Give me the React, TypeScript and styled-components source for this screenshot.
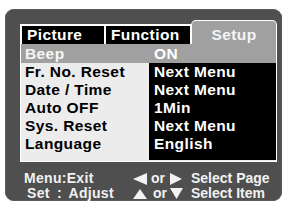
import React from "react";
import styled, { createGlobalStyle } from "styled-components";

const Global = createGlobalStyle`
  html, body { margin: 0; padding: 0; background: #ffffff; }
  body { width: 284px; height: 204px; overflow: hidden; font-family: "Liberation Sans", Arial, sans-serif; }
  * { box-sizing: border-box; }
`;

const Page = styled.div`
  padding: 9px 2px 0 5px;
`;

const Panel = styled.div`
  width: 277px;
  height: 192px;
  background: #4f4f4f;
  border-radius: 9px;
  padding: 15px 0 0 15px;
  box-shadow: inset 0 0 0 1px #5c5c5c;
`;

const Screen = styled.div`
  width: 257px;
  border: 1px solid #ffffff;
  background: #ececec;
  padding-bottom: 1px;
`;

const TabRow = styled.div`
  display: flex;
  align-items: flex-end;
  height: 19px;
  padding: 1px 0 0 1px;
  gap: 2px;
  background: #ffffff;
`;

const Tab = styled.div<{ $w: number; $active?: boolean }>`
  width: ${(p) => p.$w}px;
  height: ${(p) => (p.$active ? 24 : 18)}px;
  flex: none;
  background: ${(p) => (p.$active ? "#a0a0a0" : "#000000")};
  color: ${(p) => (p.$active ? "#f4f4f4" : "#ffffff")};
  border: ${(p) => (p.$active ? "1px solid #ffffff" : "none")};
  border-bottom: none;
  border-radius: ${(p) => (p.$active ? "5px 5px 0 0" : "0")};
  margin-left: ${(p) => (p.$active ? "-1px" : "0")};
  padding: ${(p) => (p.$active ? "5px 0 0 0" : "0 0 0 5px")};
  text-align: ${(p) => (p.$active ? "center" : "left")};
  font-size: 15.5px;
  font-weight: 700;
  line-height: 18px;
  letter-spacing: 0.4px;
  white-space: nowrap;
`;

const Body = styled.div`
  display: flex;
  flex-direction: column;
`;

const Row = styled.div<{ $hl?: boolean; $h: number }>`
  display: grid;
  grid-template-columns: 128px 127px;
  height: ${(p) => p.$h}px;
  background: ${(p) => (p.$hl ? "#a0a0a0" : "transparent")};
`;

const Label = styled.div<{ $hl?: boolean; $h: number }>`
  padding-left: 4px;
  color: ${(p) => (p.$hl ? "#f6f6f6" : "#000000")};
  font-size: 15.5px;
  font-weight: 700;
  line-height: ${(p) => p.$h}px;
  letter-spacing: 0.4px;
  white-space: nowrap;
`;

const Value = styled.div<{ $hl?: boolean; $h: number }>`
  padding-left: 5px;
  background: ${(p) => (p.$hl ? "transparent" : "#000000")};
  color: #ffffff;
  font-size: 15.5px;
  font-weight: 700;
  line-height: ${(p) => p.$h}px;
  letter-spacing: 0.4px;
  white-space: nowrap;
`;

const Footer = styled.div`
  display: grid;
  grid-template-columns: 109px 18px 19px 21px auto;
  grid-auto-rows: 15px;
  align-items: center;
  padding: 9px 0 0 4px;
  color: #f2f2f2;
  font-size: 14px;
  font-weight: 700;
  line-height: 15px;
  white-space: nowrap;
`;

const Hint = styled.span<{ $indent?: number; $wide?: boolean }>`
  padding-left: ${(p) => p.$indent ?? 0}px;
  letter-spacing: ${(p) => (p.$wide ? "0.3px" : "0")};
  word-spacing: ${(p) => (p.$wide ? "3px" : "0")};
`;

const Or = styled.span<{ $indent?: number }>`
  padding-left: ${(p) => p.$indent ?? 0}px;
`;

const Arrow = styled.svg`
  display: block;
`;

type Dir = "left" | "right" | "up" | "down";

const tri: Record<Dir, { w: number; h: number; pts: string }> = {
  left: { w: 14, h: 12, pts: "0,6 14,0 14,12" },
  right: { w: 12, h: 12, pts: "0,0 12,6 0,12" },
  up: { w: 14, h: 10, pts: "0,10 7,0 14,10" },
  down: { w: 13, h: 11, pts: "0,0 13,0 6.5,11" },
};

const Tri = ({ dir }: { dir: Dir }) => {
  const t = tri[dir];
  return (
    <Arrow width={t.w} height={t.h} viewBox={`0 0 ${t.w} ${t.h}`}>
      <polygon points={t.pts} fill="#f2f2f2" />
    </Arrow>
  );
};

const rows = [
  { label: "Beep", value: "ON" },
  { label: "Fr. No. Reset", value: "Next Menu" },
  { label: "Date / Time", value: "Next Menu" },
  { label: "Auto OFF", value: "1Min" },
  { label: "Sys. Reset", value: "Next Menu" },
  { label: "Language", value: "English" },
];

export default function App() {
  return (
    <>
      <Global />
      <Page>
        <Panel>
          <Screen>
            <TabRow>
              <Tab $w={82}>Picture</Tab>
              <Tab $w={84}>Function</Tab>
              <Tab $w={86} $active>
                Setup
              </Tab>
            </TabRow>
            <Body>
              {rows.map((r, i) => {
                const hl = i === 0;
                const h = hl ? 19 : 18;
                return (
                  <Row key={i} $hl={hl} $h={h}>
                    <Label $hl={hl} $h={h}>
                      {r.label}
                    </Label>
                    <Value $hl={hl} $h={h}>
                      {r.value}
                    </Value>
                  </Row>
                );
              })}
              <Row $h={7}>
                <Label $h={7} />
                <Value $h={7} />
              </Row>
            </Body>
          </Screen>
          <Footer>
            <Hint $wide>Menu:Exit</Hint>
            <Tri dir="left" />
            <Or>or</Or>
            <Tri dir="right" />
            <Hint>Select Page</Hint>
            <Hint $indent={3} $wide>
              Set : Adjust
            </Hint>
            <Tri dir="up" />
            <Or $indent={2}>or</Or>
            <Tri dir="down" />
            <Hint>Select Item</Hint>
          </Footer>
        </Panel>
      </Page>
    </>
  );
}
